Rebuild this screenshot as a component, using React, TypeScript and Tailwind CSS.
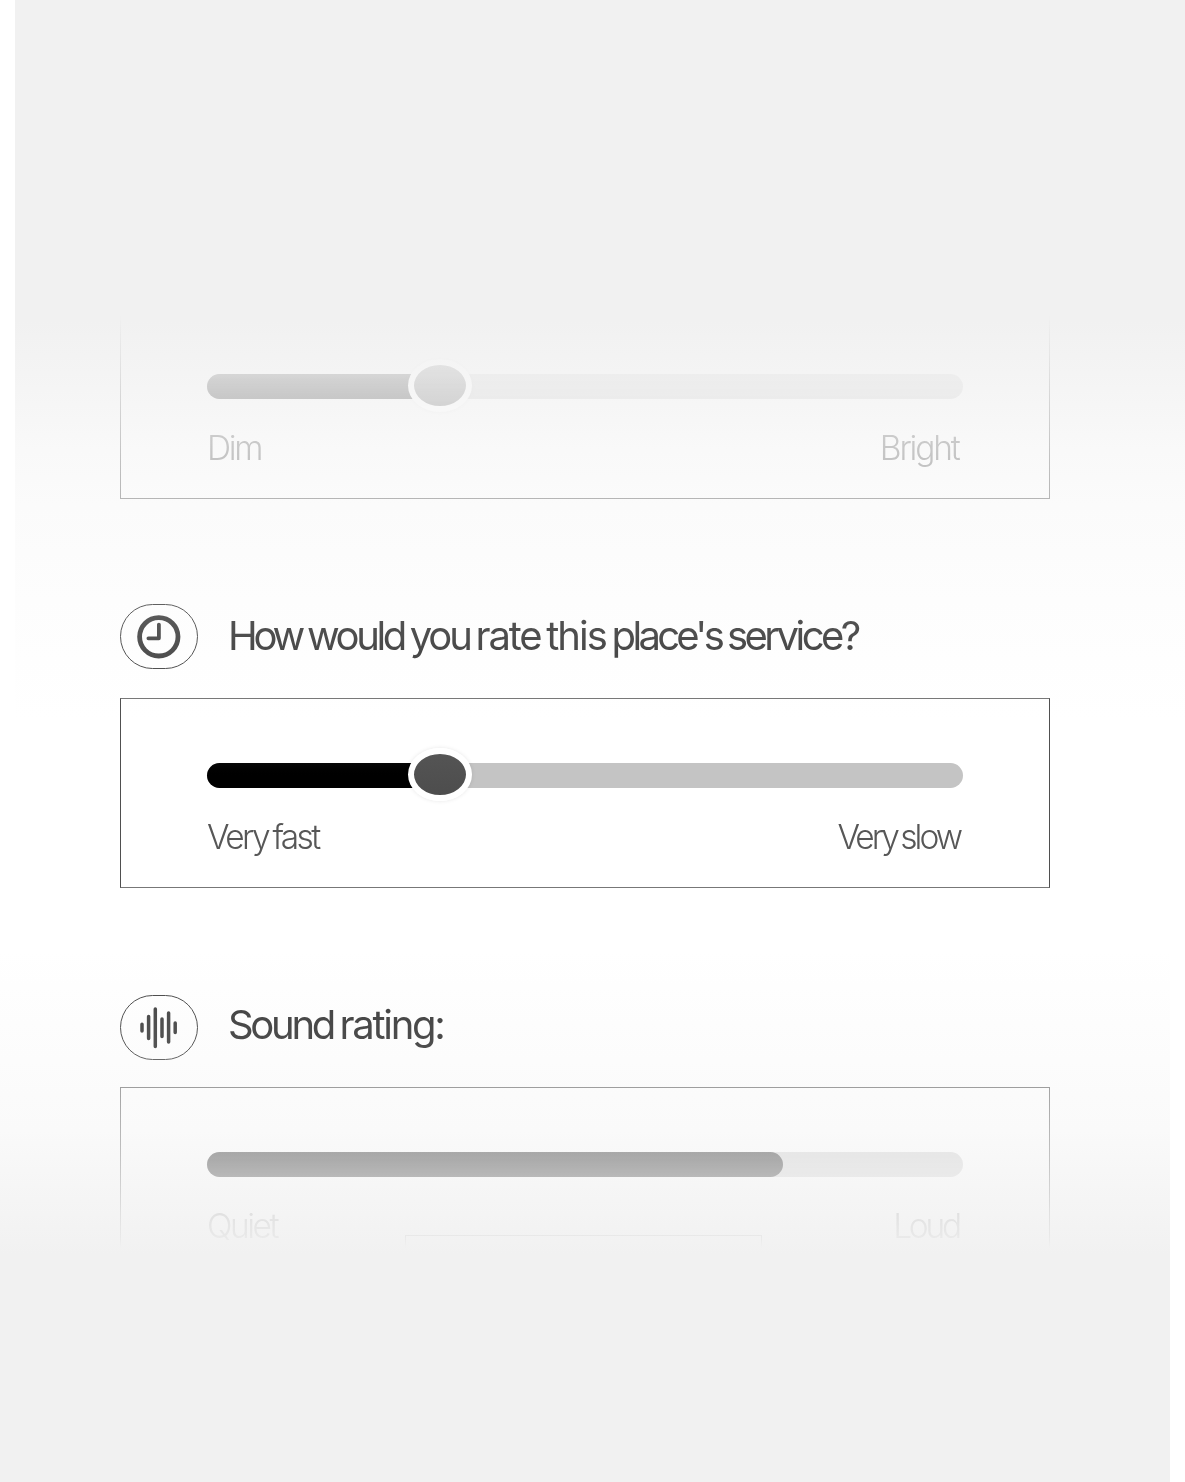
import React from "react";

type Label = { text: string; className: string };

type SliderCardProps = {
  low: Label;
  high: Label;
  fill: string;
  knob?: boolean;
  border?: string;
};

function SliderCard({ low, high, fill, knob = false, border = "border-[#4f4f4f]" }: SliderCardProps) {
  return (
    <div className={`h-[190px] w-full border px-[86px] pt-[64px] ${border}`}>
      <div className="relative h-[25px] w-full rounded-full bg-[#c4c4c4]">
        <div className={`h-full rounded-full bg-linear-to-b from-[#080808] to-black to-60% ${fill}`} />
        {knob && (
          <div className="absolute -top-[15px] left-[201px] h-[53px] w-[64px] rounded-[50%] border-[6px] border-white bg-linear-to-b from-[#555555] to-[#4c4c4c] bg-origin-border shadow-[0_0_4px_rgba(0,0,0,0.1)]" />
        )}
      </div>
      <div className="mt-[28px] flex justify-between text-[33.5px] leading-[42px] font-light text-[#575757]">
        <span className={low.className}>{low.text}</span>
        <span className={high.className}>{high.text}</span>
      </div>
    </div>
  );
}

function Badge({ children }: { children: React.ReactNode }) {
  return (
    <div className="flex h-[65px] w-[78px] shrink-0 items-center justify-center rounded-[33px] border border-[#4f4f4f]">
      {children}
    </div>
  );
}

function ClockIcon() {
  return (
    <svg className="mr-px" width="44" height="44" viewBox="0 0 44 44" fill="none" stroke="#4b4b4b">
      <circle cx="21.8" cy="21.8" r="19.2" strokeWidth="4.8" />
      <path d="M21.9 9.6V23.3H11.4" strokeWidth="3.8" strokeLinecap="round" strokeLinejoin="round" />
    </svg>
  );
}

function SoundIcon() {
  return (
    <svg className="mr-px" width="38" height="42" viewBox="0 0 38 42" fill="none" stroke="#4b4b4b" strokeWidth="3.5" strokeLinecap="round">
      <path d="M2 17.3v6.8M8.6 9.5v22M15.3 2v37.5M22 12v17.5M28.6 6v29M35.2 16v9.5" />
    </svg>
  );
}

const serviceTitle: Label[] = [
  { text: "How", className: "tracking-[-4.2px]" },
  { text: "would", className: "tracking-[-3.4px]" },
  { text: "you", className: "tracking-[-3.1px]" },
  { text: "rate", className: "tracking-[-2.2px]" },
  { text: "this", className: "tracking-[-2px]" },
  { text: "place's", className: "tracking-[-3.7px]" },
  { text: "service?", className: "tracking-[-3.5px]" },
];

const soundTitle: Label[] = [
  { text: "Sound", className: "tracking-[-3.3px]" },
  { text: "rating:", className: "tracking-[-2.3px]" },
];

function Title({ words, className }: { words: Label[]; className: string }) {
  return (
    <h2 className={`text-[40px] leading-[50px] font-normal tracking-[-3.1px] whitespace-nowrap text-[#444444] ${className}`}>
      {words.map((word, i) => (
        <React.Fragment key={word.text}>
          {i > 0 && " "}
          <span className={word.className}>{word.text}</span>
        </React.Fragment>
      ))}
    </h2>
  );
}

export default function App() {
  return (
    <div className="relative h-[1482px] w-[1185px] overflow-hidden bg-white font-['Inter',sans-serif]">
      <div className="absolute top-0 right-0 h-[740px] w-[1170px] bg-[linear-gradient(to_bottom,#f1f1f1_320px,#f5f5f5_390px,#f9f9f9_450px,#fbfbfb_505px,#fdfdfd_600px,#ffffff_720px)]" />
      <div className="absolute bottom-0 left-0 h-[742px] w-[1170px] bg-[linear-gradient(to_bottom,#ffffff_210px,#fcfcfc_320px,#fafafa_390px,#f7f7f7_430px,#f5f5f5_460px,#f1f1f1_515px,#f1f1f1_742px)]" />

      <main className="relative flex h-[1482px] flex-col px-[120px] pt-[309px] pr-[135px] [mask-image:linear-gradient(to_bottom,transparent_315px,rgba(0,0,0,.13)_375px,rgba(0,0,0,.19)_400px,rgba(0,0,0,.31)_450px,rgba(0,0,0,.4)_498px,rgba(0,0,0,.9)_604px,rgba(0,0,0,.99)_660px,black_780px,black_1000px,rgba(0,0,0,.95)_1050px,rgba(0,0,0,.7)_1075px,rgba(0,0,0,.5)_1090px,rgba(0,0,0,.4)_1130px,rgba(0,0,0,.33)_1153px,rgba(0,0,0,.25)_1177px,rgba(0,0,0,.12)_1213px,rgba(0,0,0,.05)_1238px,transparent_1248px)]">
        <SliderCard
          low={{ text: "Dim", className: "tracking-[-2.3px]" }}
          high={{ text: "Bright", className: "mr-[4.5px] tracking-[-2.2px]" }}
          fill="w-[232px]"
          knob
        />

        <div className="mt-[105px] flex items-center gap-[30px]">
          <Badge>
            <ClockIcon />
          </Badge>
          <Title words={serviceTitle} className="-mt-[2px] [word-spacing:-2.3px]" />
        </div>
        <div className="mt-[29px]">
          <SliderCard
            low={{ text: "Very fast", className: "tracking-[-2.6px] [word-spacing:-2.5px]" }}
            high={{ text: "Very slow", className: "mr-[3px] tracking-[-3px] [word-spacing:-3px]" }}
            fill="w-[232px]"
            border="border-x-[#4f4f4f] border-y-[#777777]"
            knob
          />
        </div>

        <div className="mt-[107px] flex items-center gap-[30px]">
          <Badge>
            <SoundIcon />
          </Badge>
          <Title words={soundTitle} className="-mt-[5px] [word-spacing:-1.5px]" />
        </div>
        <div className="mt-[27px]">
          <SliderCard
            low={{ text: "Quiet", className: "tracking-[-2.5px]" }}
            high={{ text: "Loud", className: "mr-[4px] tracking-[-3.2px]" }}
            fill="w-[576px]"
          />
        </div>
        <div className="-mt-[42px] ml-[285px] h-[90px] w-[357px] border border-[#4f4f4f]" />
      </main>
    </div>
  );
}
